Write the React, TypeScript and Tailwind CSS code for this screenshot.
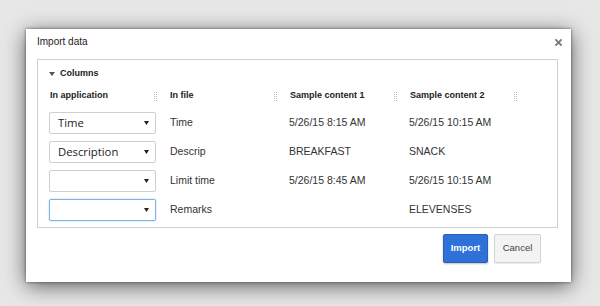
import React from "react";

const Grip = () => (
  <svg width="3" height="9" viewBox="0 0 3 9" className="shrink-0">
    {[0, 2, 4, 6, 8].map((y) => (
      <g key={y}>
        <rect x="0" y={y} width="1" height="1" fill="#bdbdbd" />
        <rect x="2" y={y} width="1" height="1" fill="#bdbdbd" />
      </g>
    ))}
  </svg>
);

const Arrow = () => (
  <svg width="5" height="4" viewBox="0 0 5 4" className="shrink-0">
    <path d="M0 0H5L2.5 4Z" fill="#222" />
  </svg>
);

const Select = ({ value, focused }: { value: string; focused?: boolean }) => (
  <div
    className={
      focused
        ? "flex h-[22px] w-[107px] items-center justify-between rounded-[2px] border border-[#7cb3e6] bg-white pl-[8px] pr-[6px] shadow-[0_0_2px_rgba(102,175,233,0.6)]"
        : "flex h-[22px] w-[107px] items-center justify-between rounded-[2px] border border-[#cfcfcf] bg-white pl-[8px] pr-[6px]"
    }
  >
    <span className="text-[11.3px] leading-none text-[#222] [font-family:'Open_Sans',sans-serif]">{value}</span>
    <Arrow />
  </div>
);

const rows = [
  { app: "Time", file: "Time", s1: "5/26/15 8:15 AM", s2: "5/26/15 10:15 AM" },
  { app: "Description", file: "Descrip", s1: "BREAKFAST", s2: "SNACK" },
  { app: "", file: "Limit time", s1: "5/26/15 8:45 AM", s2: "5/26/15 10:15 AM" },
  { app: "", file: "Remarks", s1: "", s2: "ELEVENSES", focused: true },
];

const headers = ["In application", "In file", "Sample content 1", "Sample content 2"];

export default function App() {
  return (
    <div className="h-[306px] w-[600px] overflow-hidden bg-[#e7e7e7] pl-[26px] pt-[29px] [font-family:'Liberation_Sans',Arial,sans-serif]">
      <div className="flex h-[253px] w-[545px] flex-col bg-white pl-[11px] pr-[13px] shadow-[0_0_3px_rgba(0,0,0,0.5),0_4px_20px_rgba(0,0,0,0.6)]">
        <div className="flex h-[30px] items-start justify-between pt-[7px]">
          <span className="text-[10px] leading-[12px] text-[#222]">Import data</span>
          <svg width="7" height="7" viewBox="0 0 7 7" className="-mr-[4px] mt-[3px]">
            <path d="M1 1L6 6M6 1L1 6" stroke="#7a7a7a" strokeWidth="1.8" strokeLinecap="square" />
          </svg>
        </div>
        <div className="flex h-[169px] flex-col border border-[#d0d0d0] pl-[11px]">
          <div className="flex h-[26px] items-center gap-[5px] pt-[1px]">
            <svg width="6" height="4" viewBox="0 0 6 4">
              <path d="M0 0H6L3 4Z" fill="#555" />
            </svg>
            <span className="text-[9px] font-bold text-[#222]">Columns</span>
          </div>
          <div className="flex h-[20px] items-center">
            {headers.map((h) => (
              <div key={h} className="flex w-[120px] items-center pl-[1px] pr-[12px]">
                <span className="flex-1 text-[9px] font-bold text-[#222]">{h}</span>
                <Grip />
              </div>
            ))}
          </div>
          <div className="mt-[6px] flex flex-col gap-[7px]">
            {rows.map((r, i) => (
              <div key={i} className="flex h-[22px] items-center">
                <div className="w-[120px]">
                  <Select value={r.app} focused={r.focused} />
                </div>
                <div className="w-[120px] pl-[1px] text-[10.5px] text-[#333]">{r.file}</div>
                <div className="w-[120px] text-[10.5px] text-[#333]">{r.s1}</div>
                <div className="w-[120px] text-[10.5px] text-[#333]">{r.s2}</div>
              </div>
            ))}
          </div>
        </div>
        <div className="mt-[6px] flex justify-end gap-[6px] pr-[17px]">
          <div className="flex h-[29px] w-[45px] items-center justify-center rounded-[2px] border border-[#2a5fb8] bg-[#2e71d8] text-[9.5px] font-bold text-white shadow-[0_1px_2px_rgba(0,0,0,0.25)]">
            Import
          </div>
          <div className="flex h-[29px] w-[47px] items-center justify-center rounded-[2px] border border-[#d3d3d3] bg-[#f3f3f3] text-[9.5px] text-[#444] shadow-[0_1px_1px_rgba(0,0,0,0.08)]">
            Cancel
          </div>
        </div>
      </div>
    </div>
  );
}
